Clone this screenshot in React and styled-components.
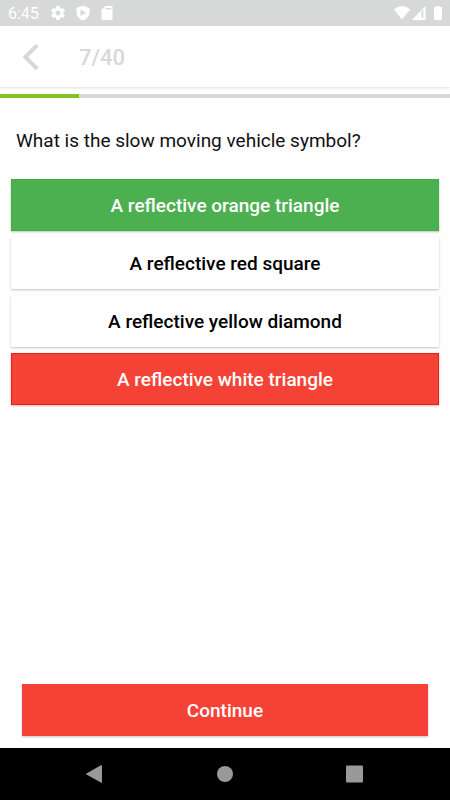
import React from "react";
import styled, { createGlobalStyle } from "styled-components";

const QUESTION = {
    number: 7,
    total: 40,
    text: "What is the slow moving vehicle symbol?",
    options: [
        { text: "A reflective orange triangle", state: "correct" },
        { text: "A reflective red square" },
        { text: "A reflective yellow diamond" },
        { text: "A reflective white triangle", state: "wrong" },
    ],
};

export default function App() {
    const { number, total, text, options } = QUESTION;

    return (
        <>
            <GlobalStyle />
            <Screen>
                <StatusBar />
                <AppBar>
                    <BackBtn aria-label="Back">
                        <svg width="18" height="28" viewBox="0 0 18 28">
                            <path d="M14.200 2.200 2.400 14l11.800 11.800" transform="translate(0 -1)" fill="none" stroke="#d7d9d8" strokeWidth="4" />
                        </svg>
                    </BackBtn>
                    <Counter>{number}/{total}</Counter>
                </AppBar>
                <Progress role="progressbar" aria-label="Questions" aria-valuenow={number} aria-valuemax={total}>
                    <ProgressFill style={{ width: `${(number / total) * 100}%` }} />
                </Progress>

                <Content>
                    <Question>{text}</Question>
                    <Options>
                        {options.map((option) => (
                            <OptionBtn key={option.text} $state={option.state}>
                                {option.text}
                            </OptionBtn>
                        ))}
                    </Options>
                </Content>

                <Footer>
                    <ContinueBtn>Continue</ContinueBtn>
                </Footer>
                <NavBar />
            </Screen>
        </>
    );
}

function StatusBar() {
    return (
        <StatusWrap>
            <Clock>6:45</Clock>
            <Notifications>
                <svg width="14" height="14" viewBox="2 2 20 20" fill="#fff">
                    <path d="M19.43 12.98c.04-.32.07-.64.07-.98s-.03-.66-.07-.98l2.11-1.65c.19-.15.24-.42.12-.64l-2-3.46c-.12-.22-.39-.3-.61-.22l-2.49 1c-.52-.4-1.08-.73-1.69-.98l-.38-2.65C14.46 2.18 14.25 2 14 2h-4c-.25 0-.46.18-.49.42l-.38 2.65c-.61.25-1.17.59-1.69.98l-2.49-1c-.23-.09-.49 0-.61.22l-2 3.46c-.13.22-.07.49.12.64l2.11 1.65c-.04.32-.07.65-.07.98s.03.66.07.98l-2.11 1.65c-.19.15-.24.42-.12.64l2 3.46c.12.22.39.3.61.22l2.49-1c.52.4 1.08.73 1.69.98l.38 2.65c.03.24.24.42.49.42h4c.25 0 .46-.18.49-.42l.38-2.65c.61-.25 1.17-.59 1.69-.98l2.49 1c.23.09.49 0 .61-.22l2-3.46c.12-.22.07-.49-.12-.64l-2.11-1.65zM12 15.5c-1.93 0-3.5-1.57-3.5-3.5s1.57-3.5 3.5-3.5 3.5 1.57 3.5 3.5-1.57 3.5-3.5 3.5z" />
                </svg>
                <svg width="14" height="16" viewBox="0 0 14 16">
                    <path d="M7 .5 13.500 3v4.500c0 3.500-2.600 6.700-6.500 8C3.100 14.200.5 11 .5 7.500V3z" fill="#fff" />
                    <path d="M4.500 4.500v6.500L10.300 7.750z" fill="#d7d9d8" />
                </svg>
                <svg width="12" height="14" viewBox="0 0 12 14">
                    <path d="M4.500 0H10.500Q11.500 0 11.500 1V13Q11.500 14 10.500 14H1.500Q.5 14 .5 13V4z" fill="#fff" />
                    <path d="M4.500 2h6v1.500h-6z" fill="#d7d9d8" />
                </svg>
            </Notifications>
            <Signals>
                <svg width="16" height="14" viewBox="0 0 16 14">
                    <path d="M0 3.500C4.500-.9 11.500-.9 16 3.500L8 13.500z" fill="#fff" />
                </svg>
                <svg width="14" height="14" viewBox="0 0 14 14">
                    <path d="M13.500 0v14H0z" fill="#fff" />
                    <path d="M9.500 5 12 3.500V12H9.500z" fill="#d7d9d8" />
                    <path d="M11 4.500h.7V12H11z" fill="#fff" />
                </svg>
                <svg width="8" height="14" viewBox="0 0 8 14">
                    <path d="M2 0h4v1h1q1 0 1 1v11q0 1-1 1H1q-1 0-1-1V2q0-1 1-1h1z" fill="#fff" />
                </svg>
            </Signals>
        </StatusWrap>
    );
}

function NavBar() {
    return (
        <NavWrap aria-label="System">
            <NavBtn aria-label="Back">
                <svg width="18" height="18" viewBox="0 0 18 18">
                    <path d="M14.800.3Q16 0 16 1v16q0 1-1.200.6L.5 9.600Q-.5 9 .5 8.400z" fill="#999" />
                </svg>
            </NavBtn>
            <NavBtn aria-label="Home">
                <svg width="18" height="18" viewBox="0 0 18 18">
                    <circle cx="9" cy="9" r="8" fill="#999" />
                </svg>
            </NavBtn>
            <NavBtn aria-label="Recent apps">
                <svg width="18" height="18" viewBox="0 0 18 18">
                    <rect x="0" y=".5" width="17" height="17" rx="1" fill="#999" />
                </svg>
            </NavBtn>
        </NavWrap>
    );
}

const COLORS = {
    correct: "#4caf50",
    wrong: "#f44336",
};

const EDGES = {
    correct: "#3fac44",
    wrong: "#f41c10",
};

const GlobalStyle = createGlobalStyle`
    body{
        margin: 0;
        background: #fefefe;
        font-family: Roboto, "Liberation Sans", sans-serif;
    }
    *{
        box-sizing: border-box;
    }
    button{
        border: none;
        padding: 0;
        font-family: inherit;
        cursor: pointer;
    }
    svg{
        display: block;
    }
`

const Screen = styled.div`
    min-height: 100vh;
    display: flex;
    flex-direction: column;
`

const StatusWrap = styled.div`
    height: 26px;
    padding: 0 8px;
    display: flex;
    align-items: center;
    background: #d7d9d8;
    color: white;
`

const Clock = styled.span`
    padding-top: 2px;
    font-size: 16px;
    line-height: 24px;
`

const Notifications = styled.div`
    display: flex;
    align-items: center;
    gap: 11px;
    margin-left: 12px;
`

const Signals = styled.div`
    display: flex;
    align-items: center;
    gap: 2px;
    margin-left: auto;
    svg:last-child{
        margin-left: 6px;
    }
`

const AppBar = styled.header`
    height: 61px;
    padding: 3px 21px 0;
    display: flex;
    align-items: center;
    gap: 36px;
    background: white;
    box-shadow: 0 1px 2px rgba(0, 0, 0, 0.12);
`

const BackBtn = styled.button`
    padding: 0 2px;
    background: none;
`

const Counter = styled.h1`
    margin: 0;
    font-size: 22px;
    font-weight: 500;
    line-height: 28px;
    color: #d7d9d8;
`

const Progress = styled.div`
    height: 4px;
    margin-top: 7px;
    background: #d7d9d8;
`

const ProgressFill = styled.div`
    height: 100%;
    background: #84c225;
`

const Content = styled.main`
    flex: 1;
    padding: 31px 11px;
`

const Question = styled.p`
    margin: 0 5px 26px;
    font-size: 19px;
    line-height: 24px;
    color: #111;
`

const Options = styled.div`
    display: flex;
    flex-direction: column;
    gap: 6px;
`

const BaseBtn = styled.button`
    width: 100%;
    height: 52px;
    padding-top: 2px;
    font-size: 19px;
    font-weight: 500;
    line-height: 24px;
    box-shadow: 0 1px 2px rgba(0, 0, 0, 0.24);
`

const OptionBtn = styled(BaseBtn)`
    color: ${({ $state }) => ($state ? "white" : "black")};
    background: ${({ $state }) => COLORS[$state] || "white"};
    border: 1px solid ${({ $state }) => EDGES[$state] || "white"};
`

const Footer = styled.footer`
    padding: 0 22px 12px;
`

const ContinueBtn = styled(BaseBtn)`
    color: white;
    background: ${COLORS.wrong};
`

const NavWrap = styled.nav`
    height: 52px;
    display: flex;
    align-items: center;
    justify-content: center;
    gap: 94px;
    background: black;
`

const NavBtn = styled.button`
    padding: 9px;
    background: none;
`
